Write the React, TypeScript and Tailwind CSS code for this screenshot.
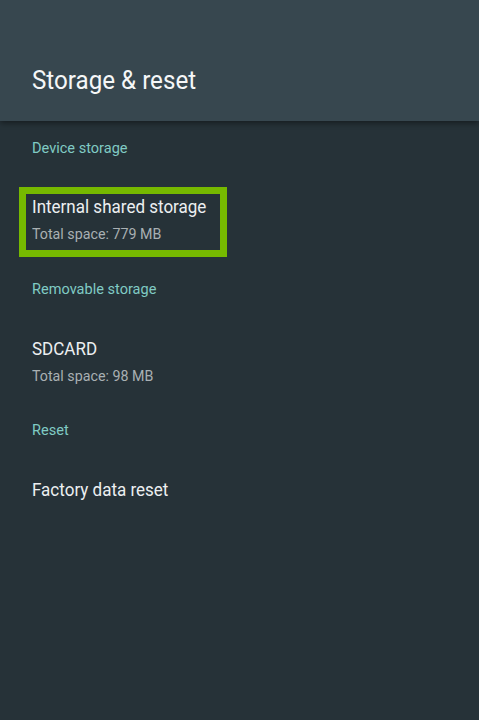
import React from "react";

const font = { fontFamily: "Roboto, 'Noto Sans', sans-serif" };

function Cond({ children, scale }: { children: React.ReactNode; scale: string }) {
  return <span className={"inline-block origin-left whitespace-nowrap " + scale}>{children}</span>;
}

function SectionHeader({ children }: { children: React.ReactNode }) {
  return (
    <div className="pl-[13px] text-[15px] leading-[20px] text-[#80cbc4]">
      <Cond scale="scale-x-[0.97]">{children}</Cond>
    </div>
  );
}

function Item({ title, subtitle, focused }: { title: string; subtitle?: string; focused?: boolean }) {
  return (
    <div
      className={
        "border-[7px] pl-[6px] pt-[1px] pb-[6px] " +
        (focused ? "border-[#76b900] w-[208px]" : "border-transparent")
      }
    >
      <div className="text-[18px] leading-[24px] text-[#eceff1]">
        <Cond scale="scale-x-[0.945]">{title}</Cond>
      </div>
      {subtitle && (
        <div className="mt-[5px] text-[15px] leading-[20px] text-[#a9b0b3]">
          <Cond scale="scale-x-[0.95]">{subtitle}</Cond>
        </div>
      )}
    </div>
  );
}

export default function App() {
  return (
    <div className="w-[479px] h-[720px] bg-[#263238] overflow-hidden" style={font}>
      <div className="relative z-10 h-[121px] bg-[#37474f] shadow-[0_2px_6px_rgba(0,0,0,0.45)] px-8 pt-[64px]">
        <div className="text-[26px] leading-[32px] text-[#f5f7f8]">
          <Cond scale="scale-x-[0.93]">Storage &amp; reset</Cond>
        </div>
      </div>
      <div className="px-[19px] pt-[17px] flex flex-col">
        <SectionHeader>Device storage</SectionHeader>
        <div className="mt-[29px]">
          <Item title="Internal shared storage" subtitle="Total space: 779 MB" focused />
        </div>
        <div className="mt-[22px]">
          <SectionHeader>Removable storage</SectionHeader>
        </div>
        <div className="mt-[30px]">
          <Item title="SDCARD" subtitle="Total space: 98 MB" />
        </div>
        <div className="mt-[21px]">
          <SectionHeader>Reset</SectionHeader>
        </div>
        <div className="mt-[30px]">
          <Item title="Factory data reset" />
        </div>
      </div>
    </div>
  );
}
